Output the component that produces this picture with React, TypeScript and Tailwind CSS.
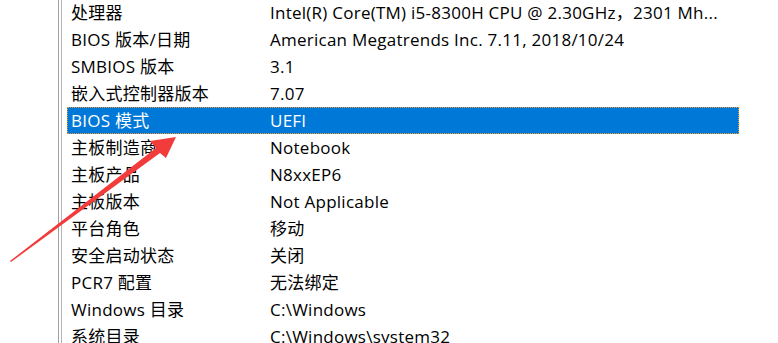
import React from "react";

const rows: [string, string][] = [
  ["处理器", "Intel(R) Core(TM) i5-8300H CPU @ 2.30GHz，2301 Mh..."],
  ["BIOS 版本/日期", "American Megatrends Inc. 7.11, 2018/10/24"],
  ["SMBIOS 版本", "3.1"],
  ["嵌入式控制器版本", "7.07"],
  ["BIOS 模式", "UEFI"],
  ["主板制造商", "Notebook"],
  ["主板产品", "N8xxEP6"],
  ["主板版本", "Not Applicable"],
  ["平台角色", "移动"],
  ["安全启动状态", "关闭"],
  ["PCR7 配置", "无法绑定"],
  ["Windows 目录", "C:\\Windows"],
  ["系统目录", "C:\\Windows\\system32"],
];

export default function App() {
  return (
    <div
      className="relative w-[778px] h-[343px] bg-white overflow-hidden flex text-black"
      style={{ fontFamily: '"Open Sans", "Noto Sans CJK SC", sans-serif' }}
    >
      <div className="w-[58px] shrink-0" />
      <div className="w-[1px] shrink-0 bg-[#a0a0a0]" />
      <div className="w-[2px] shrink-0" />
      <div className="w-[1px] shrink-0 bg-[#b4b4b4]" />
      <div className="w-[5px] shrink-0" />
      <div className="flex flex-col mt-[-1px] w-[672px] shrink-0">
        {rows.map(([k, v], i) => {
          const sel = i === 4;
          return (
            <div
              key={i}
              className={
                sel
                  ? "flex items-center h-[27px] bg-[#0078d7] text-white border border-dotted border-[#f39530] pl-[3px] shrink-0"
                  : "flex items-center h-[27px] pl-[4px] shrink-0"
              }
            >
              <div className="w-[199px] shrink-0 text-[17px] tracking-[0.25px] leading-none whitespace-nowrap">{k}</div>
              <div className="text-[17px] tracking-[0.25px] leading-none whitespace-nowrap">{v}</div>
            </div>
          );
        })}
      </div>
      <svg
        className="absolute left-0 top-0 pointer-events-none"
        width="778"
        height="343"
        viewBox="0 0 778 343"
      >
        <polygon
          points="10,261 156,148 150,141 176,137 166,158 160,153 11,262"
          fill="#f23b3b"
        />
      </svg>
    </div>
  );
}
